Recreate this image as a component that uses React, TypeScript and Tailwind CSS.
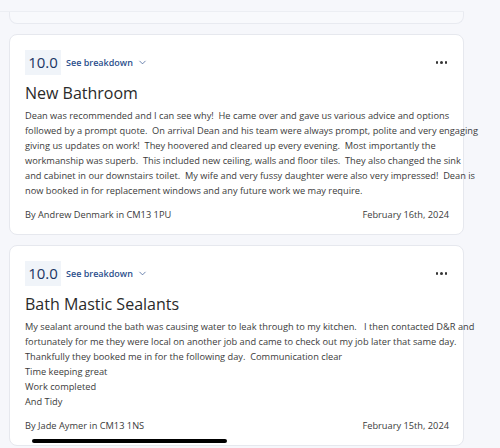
import { ChevronDown } from 'lucide-react'

type Review = {
  title: string
  lines: string[]
  author: string
  date: string
}

const reviews: Review[] = [
  {
    title: 'New Bathroom',
    lines: [
      'Dean was recommended and I can see why!  He came over and gave us various advice and options',
      'followed by a prompt quote.  On arrival Dean and his team were always prompt, polite and very engaging',
      'giving us updates on work!  They hoovered and cleared up every evening.  Most importantly the',
      'workmanship was superb.  This included new ceiling, walls and floor tiles.  They also changed the sink',
      'and cabinet in our downstairs toilet.  My wife and very fussy daughter were also very impressed!  Dean is',
      'now booked in for replacement windows and any future work we may require.',
    ],
    author: 'By Andrew Denmark in CM13 1PU',
    date: 'February 16th, 2024',
  },
  {
    title: 'Bath Mastic Sealants',
    lines: [
      'My sealant around the bath was causing water to leak through to my kitchen.   I then contacted D&R and',
      'fortunately for me they were local on another job and came to check out my job later that same day.',
      'Thankfully they booked me in for the following day.  Communication clear',
      'Time keeping great',
      'Work completed',
      'And Tidy',
    ],
    author: 'By Jade Aymer in CM13 1NS',
    date: 'February 15th, 2024',
  },
]

function ReviewCard({ review }: { review: Review }) {
  return (
    <div className="bg-white border border-[#e6e8ee] rounded-lg pl-[15px] pr-[14px] pt-[15px] pb-[12px]">
      <div className="flex items-center justify-between">
        <div className="flex items-center gap-[5px]">
          <div className="bg-[#f0f4f9] h-[25px] w-[36px] flex items-center justify-center text-[15px] text-[#1a3563]">
            10.0
          </div>
          <button className="flex items-center gap-[4px] text-[9px] font-semibold text-[#2b4f8c]">
            See breakdown
            <ChevronDown className="w-[11px] h-[11px]" strokeWidth={1.5} />
          </button>
        </div>
        <div className="flex items-center gap-[2px] pr-[2px]">
          <span className="w-[2.5px] h-[2.5px] rounded-full bg-[#333]" />
          <span className="w-[2.5px] h-[2.5px] rounded-full bg-[#333]" />
          <span className="w-[2.5px] h-[2.5px] rounded-full bg-[#333]" />
        </div>
      </div>

      <h2 className="mt-[8px] text-[16px] leading-[20px] font-medium text-[#2a2a2a]">{review.title}</h2>

      <div className="mt-[5px] text-[9.25px] leading-[15px] text-[#3b3b3b]">
        {review.lines.map((line, i) => (
          <p key={i} className="whitespace-pre">
            {line}
          </p>
        ))}
      </div>

      <div className="mt-[9px] flex items-center justify-between text-[9.25px] leading-[15px] text-[#3b3b3b]">
        <span>{review.author}</span>
        <span>{review.date}</span>
      </div>
    </div>
  )
}

export default function App() {
  return (
    <div
      className="h-[448px] w-[500px] overflow-hidden bg-[#f6f7fb] relative"
      style={{ fontFamily: '"Open Sans", "Noto Sans", sans-serif' }}
    >
      <div className="w-[464px]">
        {/* previous card, cut off */}
        <div className="h-[12px] border-b border-[#eceef3]" />
        <div className="ml-[9px] h-[12px] bg-[#f8f9fc] border border-t-0 border-[#e8eaf0] rounded-b-lg" />

        <div className="ml-[9px] mt-[10px] flex flex-col gap-[10px]">
          {reviews.map((r) => (
            <ReviewCard key={r.title} review={r} />
          ))}
        </div>
      </div>

      {/* home indicator */}
      <div className="absolute left-[32px] top-[439px] w-[195px] h-[4px] rounded-full bg-black" />
    </div>
  )
}
